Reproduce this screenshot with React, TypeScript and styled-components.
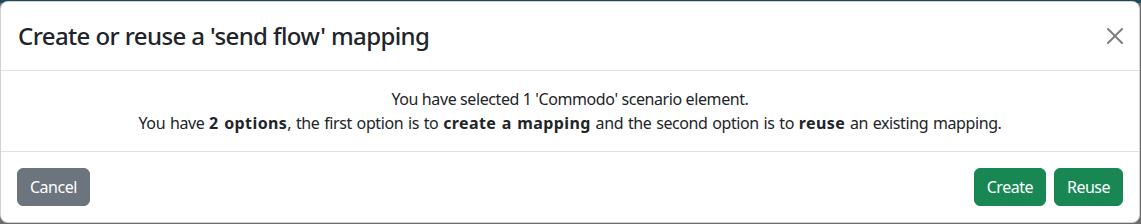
import React from 'react';
import styled, { createGlobalStyle } from 'styled-components';

const GlobalStyle = createGlobalStyle`
  html, body {
    margin: 0;
    padding: 0;
    background: #6b6b6b;
  }
  body {
    font-family: 'Segoe UI', 'Noto Sans', 'Open Sans', sans-serif;
    color: #212529;
  }
  * {
    box-sizing: border-box;
  }
`;

const Backdrop = styled.div`
  width: 1141px;
  height: 224px;
  padding: 1px 1px 1px 0;
  background: linear-gradient(#1d4a5a 0, #1d4a5a 3px, #6b6b6b 3px);
`;

const Dialog = styled.div`
  display: flex;
  flex-direction: column;
  background: #fff;
  border: 1px solid rgba(0, 0, 0, 0.175);
  border-radius: 8px;
`;

const Header = styled.div`
  display: flex;
  align-items: center;
  justify-content: space-between;
  padding: 16px;
  border-bottom: 1px solid #dee2e6;
`;

const Title = styled.h4`
  margin: 0 0 0 1px;
  font-size: 24px;
  font-weight: 500;
  line-height: 36px;
  letter-spacing: -0.6px;
  color: #212529;
`;

const CloseButton = styled.button`
  display: flex;
  align-items: center;
  justify-content: center;
  width: 16px;
  height: 16px;
  padding: 0;
  border: 0;
  background: transparent;
  opacity: 0.5;
  cursor: pointer;
`;

const Body = styled.div`
  padding: 16px;
  text-align: center;
  font-size: 16px;
  line-height: 24px;
  letter-spacing: -0.4px;
  border-bottom: 1px solid #dee2e6;
`;

const Line = styled.div<{ $wide?: boolean }>`
  word-spacing: ${(p) => (p.$wide ? '1px' : '0')};
`;

const Strong = styled.b`
  font-weight: 700;
  letter-spacing: 0.4px;
`;

const Footer = styled.div`
  display: flex;
  align-items: center;
  padding: 12px;
`;

const Spacer = styled.div`
  flex: 1;
`;

const Button = styled.button<{ $variant: 'secondary' | 'success' }>`
  margin: 4px;
  padding: 6px 12px;
  font-family: inherit;
  font-size: 16px;
  line-height: 24px;
  letter-spacing: -0.5px;
  color: #fff;
  border-radius: 6px;
  border: 1px solid ${(p) => (p.$variant === 'success' ? '#198754' : '#6c757d')};
  background: ${(p) => (p.$variant === 'success' ? '#198754' : '#6c757d')};
  cursor: pointer;
`;

const CloseIcon = () => (
  <svg width="16" height="16" viewBox="0 0 16 16" fill="#000">
    <path d="M.293.293a1 1 0 0 1 1.414 0L8 6.586 14.293.293a1 1 0 1 1 1.414 1.414L9.414 8l6.293 6.293a1 1 0 0 1-1.414 1.414L8 9.414l-6.293 6.293a1 1 0 0 1-1.414-1.414L6.586 8 .293 1.707a1 1 0 0 1 0-1.414z" />
  </svg>
);

export default function App() {
  return (
    <>
      <GlobalStyle />
      <Backdrop>
        <Dialog>
          <Header>
            <Title>Create or reuse a 'send flow' mapping</Title>
            <CloseButton aria-label="Close">
              <CloseIcon />
            </CloseButton>
          </Header>
          <Body>
            <Line>You have selected 1 'Commodo' scenario element.</Line>
            <Line $wide>
              You have <Strong>2 options</Strong>, the first option is to <Strong>create a mapping</Strong> and the second option is to <Strong>reuse</Strong> an existing mapping.
            </Line>
          </Body>
          <Footer>
            <Button $variant="secondary">Cancel</Button>
            <Spacer />
            <Button $variant="success">Create</Button>
            <Button $variant="success">Reuse</Button>
          </Footer>
        </Dialog>
      </Backdrop>
    </>
  );
}
